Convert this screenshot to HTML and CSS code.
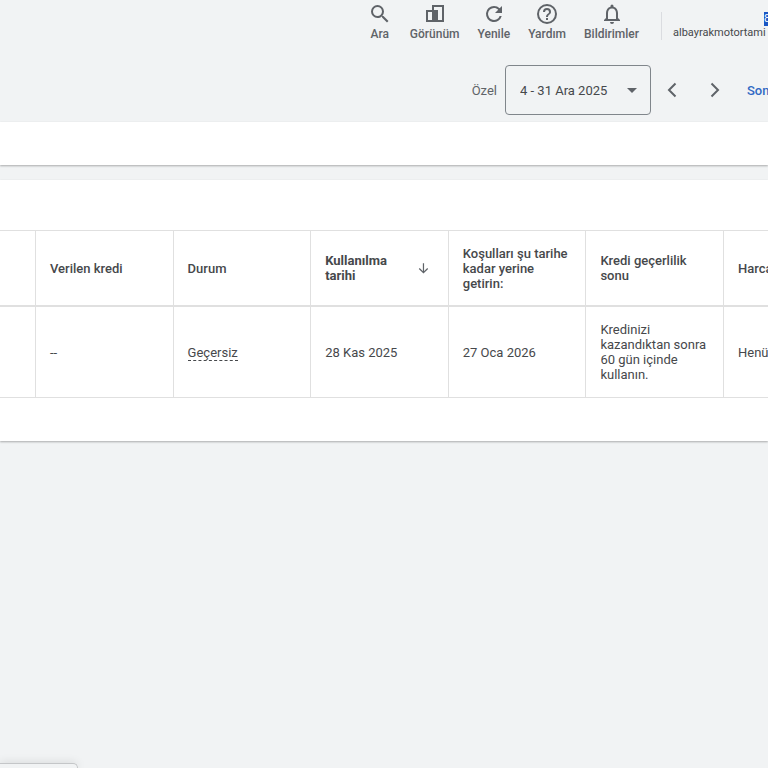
FILE: index.html
```html
<!DOCTYPE html>
<html lang="tr">
<head>
<meta charset="utf-8">
<title>Promosyonlar</title>
<link rel="stylesheet" href="styles.css">
</head>
<body>
<header class="topbar">
  <nav class="tools">
    <button class="tool" type="button">
      <svg width="24" height="24" viewBox="0 0 24 24" fill="currentColor"><path d="M15.5 14h-.79l-.28-.27A6.47 6.47 0 0 0 16 9.500a6.500 6.500 0 1 0-6.500 6.500c1.610 0 3.090-.59 4.230-1.570l.27.28v.79l5 4.990L20.490 19l-4.990-5zm-6 0a4.500 4.500 0 1 1 0-9 4.500 4.500 0 0 1 0 9z"/></svg>
      <span>Ara</span>
    </button>
    <button class="tool" type="button">
      <svg width="24" height="24" viewBox="0 0 24 24" fill="none" stroke="currentColor" stroke-width="2"><path d="M9 9H4v10h6M10 9V4h10v15H10"/><path d="M9 8h6v12H9z" fill="currentColor" stroke="none"/></svg>
      <span>Görünüm</span>
    </button>
    <button class="tool" type="button">
      <svg width="24" height="24" viewBox="0 0 24 24" fill="currentColor"><path d="M17.650 6.350A7.960 7.960 0 0 0 12 4a8 8 0 1 0 7.730 10h-2.080A6 6 0 1 1 12 6c1.660 0 3.140.69 4.220 1.780L13 11h7V4l-2.350 2.350z"/></svg>
      <span>Yenile</span>
    </button>
    <button class="tool" type="button">
      <svg width="24" height="24" viewBox="0 0 24 24" fill="currentColor"><path d="M11 18h2v-2h-2v2zm1-16a10 10 0 1 0 0 20 10 10 0 0 0 0-20zm0 18a8 8 0 1 1 0-16 8 8 0 0 1 0 16zm0-14a4 4 0 0 0-4 4h2a2 2 0 1 1 4 0c0 2-3 1.750-3 5h2c0-2.250 3-2.500 3-5a4 4 0 0 0-4-4z"/></svg>
      <span>Yardım</span>
    </button>
    <button class="tool" type="button">
      <svg width="24" height="24" viewBox="0 0 24 24" fill="currentColor"><path d="M12 22a2 2 0 0 0 2-2h-4a2 2 0 0 0 2 2zm6-6v-5c0-3.070-1.630-5.640-4.500-6.320V4a1.500 1.500 0 0 0-3 0v.68C7.640 5.360 6 7.920 6 11v5l-2 2v1h16v-1l-2-2zm-2 1H8v-6c0-2.480 1.510-4.500 4-4.500s4 2.020 4 4.500v6z"/></svg>
      <span>Bildirimler</span>
    </button>
  </nav>
  <div class="account">
    <mark class="account-id">8</mark>
    <span>albayrakmotortami</span>
  </div>
</header>
<div class="period">
  <label for="range">Özel</label>
  <div class="range-box">
    <select id="range" class="range"><option>4 - 31 Ara 2025</option></select>
    <svg class="caret" width="10" height="5" viewBox="0 0 10 5" fill="currentColor"><path d="M0 0h10L5 5z"/></svg>
  </div>
  <button class="step" type="button" aria-label="Önceki"><svg width="24" height="24" viewBox="0 0 24 24" fill="none" stroke="currentColor" stroke-width="2"><path d="M15.500 5.500L9 12l6.500 6.500"/></svg></button>
  <button class="step" type="button" aria-label="Sonraki"><svg width="24" height="24" viewBox="0 0 24 24" fill="none" stroke="currentColor" stroke-width="2"><path d="M8.500 5.500L15 12l-6.500 6.500"/></svg></button>
  <a class="recent" href="#">Son</a>
</div>
<div class="strip"></div>
<main class="card">
  <table class="credits">
    <colgroup><col class="col-lead"><col><col><col><col><col><col class="col-tail"></colgroup>
    <thead>
      <tr>
        <th></th>
        <th>Verilen kredi</th>
        <th>Durum</th>
        <th class="sorted"><div class="sort"><span>Kullanılma tarihi</span><svg width="18" height="18" viewBox="0 0 18 18" fill="none" stroke="currentColor" stroke-width="1.3"><path d="M9 4v10M4.500 9.500L9 14l4.500-4.500"/></svg></div></th>
        <th>Koşulları şu tarihe kadar yerine getirin:</th>
        <th>Kredi geçerlilik sonu</th>
        <th class="tail">Harca</th>
      </tr>
    </thead>
    <tbody>
      <tr>
        <td></td>
        <td>--</td>
        <td><span class="hint">Geçersiz</span></td>
        <td>28 Kas 2025</td>
        <td>27 Oca 2026</td>
        <td>Kredinizi kazandıktan sonra 60 gün içinde kullanın.</td>
        <td class="tail">Henü</td>
      </tr>
    </tbody>
  </table>
</main>
<div class="status"></div>
</body>
</html>
```
FILE: styles.css
```css
* { box-sizing: border-box; }

body {
  margin: 0;
  min-height: 100vh;
  overflow: hidden;
  background: #f1f3f4;
  color: #46484b;
  font: 13px/15px Roboto, sans-serif;
}

button {
  padding: 0;
  border: 0;
  background: none;
  color: #5f6368;
  font: inherit;
}

svg { display: block; }

.topbar {
  display: flex;
  justify-content: flex-end;
  height: 58px;
}

.tools {
  display: flex;
  gap: 18px;
  margin-right: 22px;
}

.tool {
  display: flex;
  flex-direction: column;
  align-items: center;
  gap: 1px;
  min-width: 24px;
  height: 42px;
  padding-top: 2px;
  font-size: 12px;
  font-weight: 500;
}

.account {
  display: flex;
  flex-direction: column;
  width: 107px;
  height: 28px;
  margin-top: 12px;
  padding-left: 11px;
  border-left: 1px solid #dadce0;
  overflow: hidden;
  font-size: 11px;
  line-height: 14px;
  white-space: nowrap;
}

.account-id {
  align-self: flex-end;
  width: 4px;
  background: #1a56c4;
  color: #fff;
  overflow: hidden;
}

.period {
  display: flex;
  align-items: center;
  justify-content: flex-end;
  height: 64px;
  color: #5f6368;
}

.range-box {
  position: relative;
  width: 146px;
  margin: 0 9px 0 8px;
}

.range {
  width: 100%;
  height: 50px;
  padding: 0 14px;
  border: 1px solid #80868b;
  border-radius: 4px;
  appearance: none;
  background: transparent;
  color: #46484b;
  font: inherit;
}

.caret {
  position: absolute;
  top: 23px;
  right: 14px;
  pointer-events: none;
}

.step + .step { margin-left: 19px; }

.recent {
  width: 21px;
  margin-left: 20px;
  overflow: hidden;
  color: #3069c4;
  font-weight: 500;
  text-decoration: none;
}

.strip {
  height: 43px;
  background: #fff;
  box-shadow: 0 1px 2px rgba(0, 0, 0, .3);
}

.card {
  margin-top: 15px;
  padding: 50px 0 43px;
  background: #fff;
  box-shadow: 0 1px 2px rgba(0, 0, 0, .3);
}

.credits {
  width: 100%;
  table-layout: fixed;
  border-collapse: separate;
  border-spacing: 0;
  border-top: 1px solid #e0e0e0;
}

.col-lead { width: 36px; }
.col-tail { width: 44px; }

th, td {
  padding: 0 14px;
  border-right: 1px solid #e0e0e0;
  text-align: left;
}

th {
  height: 76px;
  border-bottom: 2px solid #e0e0e0;
  font-weight: 500;
}

td {
  height: 91px;
  border-bottom: 1px solid #e0e0e0;
}

.sorted { font-weight: 700; }

.sort {
  display: flex;
  align-items: center;
  justify-content: space-between;
  padding-right: 2px;
}

.sort svg { color: #5f6368; }

.tail {
  padding-right: 0;
  border-right: 0;
  overflow: hidden;
  white-space: nowrap;
}

.hint { border-bottom: 1px dashed #46484b; }

.status {
  position: fixed;
  bottom: 0;
  left: 0;
  width: 78px;
  height: 5px;
  border-top: 1px solid #c4c6c8;
  border-right: 1px solid #c4c6c8;
  border-top-right-radius: 5px;
  box-shadow: 0 0 10px rgba(0, 0, 0, .15);
}
```
